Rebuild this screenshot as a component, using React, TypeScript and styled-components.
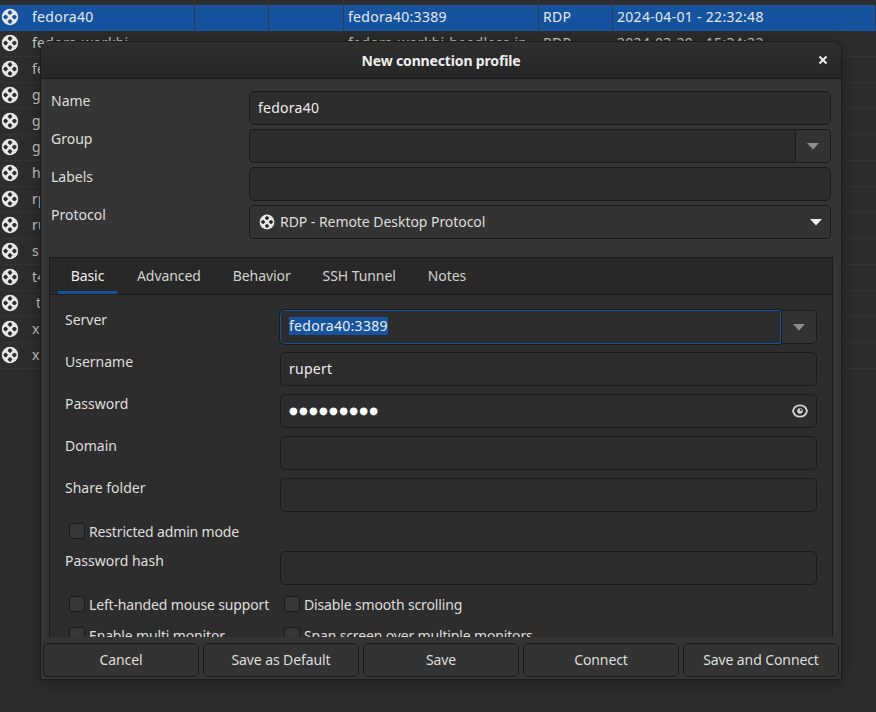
import styled, { createGlobalStyle } from "styled-components";

const SELECTED = "#15539e";
const BORDER = "#1b1b1b";
const TEXT = "#eeeeec";

const COLUMNS = "195px 74px 75px 195px 74px 1fr";

const hosts = [
  { name: "fedora40", host: "fedora40:3389", proto: "RDP", date: "2024-04-01 - 22:32:48", selected: true },
  { name: "fedora-workbi", host: "fedora-workbi-headless-in", proto: "RDP", date: "2024-03-29 - 15:34:22" },
  { name: "fedora" },
  { name: "g" },
  { name: "g" },
  { name: "g" },
  { name: "h" },
  { name: "rp" },
  { name: "ru" },
  { name: "s" },
  { name: "t4" },
  { name: "\u00a0t" },
  { name: "x1" },
  { name: "x1" },
];

const GlobalStyle = createGlobalStyle`
  html, body {
    margin: 0;
    height: 100%;
    background: #2d2d2d;
  }

  body {
    font-family: "Noto Sans", sans-serif;
    font-size: 14px;
    color: ${TEXT};
  }

  * {
    box-sizing: border-box;
  }
`;

const Page = styled.div`
  position: relative;
  width: 876px;
  height: 712px;
  overflow: hidden;
  background: #2d2d2d;
`;

const HeaderStrip = styled.div`
  display: grid;
  grid-template-columns: ${COLUMNS};
  height: 5px;
`;

const HeaderCell = styled.div`
  border-right: 1px solid #3a3a3a;
`;

const Row = styled.div<{ $selected?: boolean }>`
  display: grid;
  grid-template-columns: ${COLUMNS};
  height: 26px;
  background: ${(p) => (p.$selected ? SELECTED : "transparent")};
  border-bottom: 1px solid ${(p) => (p.$selected ? SELECTED : "#343434")};
`;

const Cell = styled.div<{ $selected?: boolean }>`
  display: flex;
  align-items: center;
  gap: 12px;
  padding: 0 0 2px 4px;
  white-space: nowrap;
  overflow: hidden;
  letter-spacing: 0.3px;
  color: ${(p) => (p.$selected ? "#e3e9f2" : "#c8c8c6")};
  border-right: 1px solid ${(p) => (p.$selected ? "#2f3b4a" : "transparent")};

  &:first-child {
    padding-left: 0;
  }
`;

const Dialog = styled.div`
  position: absolute;
  left: 40px;
  top: 41px;
  width: 802px;
  height: 639px;
  display: flex;
  flex-direction: column;
  background: #353535;
  border: 1px solid ${BORDER};
  border-radius: 10px 10px 0 0;
  box-shadow: 0 3px 16px rgba(0, 0, 0, 0.35);
`;

const TitleBar = styled.div`
  position: relative;
  flex: none;
  display: flex;
  align-items: center;
  justify-content: center;
  height: 37px;
  background: linear-gradient(#2f2f2f, #262626);
  border-bottom: 1px solid ${BORDER};
  border-radius: 9px 9px 0 0;
`;

const Title = styled.div`
  font-weight: 700;
  font-size: 14px;
  letter-spacing: -0.15px;
  color: ${TEXT};
`;

const CloseButton = styled.div`
  position: absolute;
  right: 12px;
  top: 12px;
  display: flex;
`;

const TopForm = styled.div`
  flex: none;
  display: grid;
  grid-template-columns: 198px 582px;
  row-gap: 4px;
  padding: 12px 0 0 10px;
`;

const FieldLabel = styled.div`
  line-height: 20px;
  color: #dededc;
`;

const Entry = styled.div<{ $focused?: boolean; $attached?: boolean }>`
  display: flex;
  align-items: center;
  justify-content: space-between;
  flex: 1;
  min-width: 0;
  height: 34px;
  padding: 0 8px 2px;
  background: #2d2d2d;
  border: 1px solid ${(p) => (p.$focused ? SELECTED : BORDER)};
  border-radius: ${(p) => (p.$attached ? "5px 0 0 5px" : "5px")};
  outline: ${(p) => (p.$focused ? `1px solid ${BORDER}` : "none")};
  ${(p) => (p.$attached && !p.$focused ? "border-right-width: 0;" : "")}
`;

const EntryText = styled.span`
  color: ${TEXT};
  letter-spacing: 0.25px;
`;

const SelectedText = styled.span`
  background: ${SELECTED};
  color: ${TEXT};
  line-height: 18px;
  letter-spacing: 0.3px;
`;

const Dots = styled.span`
  font-family: "DejaVu Sans", sans-serif;
  font-size: 10px;
  letter-spacing: 1.3px;
  color: #ffffff;
`;

const Combo = styled.div`
  display: flex;
`;

const ComboButton = styled.div`
  flex: none;
  width: 36px;
  height: 34px;
  display: flex;
  align-items: center;
  justify-content: center;
  background: #333333;
  border: 1px solid ${BORDER};
  border-radius: 0 5px 5px 0;
`;

const Select = styled.div`
  display: flex;
  align-items: center;
  gap: 4px;
  height: 34px;
  padding: 0 8px;
  background: #333333;
  border: 1px solid ${BORDER};
  border-radius: 5px;
`;

const SelectText = styled.span`
  flex: 1;
  color: #dededc;
  margin-bottom: 2px;
  letter-spacing: -0.05px;
`;

const Notebook = styled.div`
  flex: 1;
  min-height: 0;
  margin: 18px 8px 0;
  overflow: hidden;
  display: flex;
  flex-direction: column;
  background: #2d2d2d;
  border: 1px solid ${BORDER};
  border-bottom: 0;
`;

const TabBar = styled.div`
  flex: none;
  display: flex;
  gap: 8px;
  height: 37px;
  padding-left: 8px;
  background: #282828;
  border-bottom: 1px solid ${BORDER};
`;

const Tab = styled.div<{ $active?: boolean }>`
  display: flex;
  align-items: center;
  justify-content: center;
  min-width: 59px;
  padding: 2px 12px 0;
  letter-spacing: -0.08px;
  color: ${(p) => (p.$active ? TEXT : "#d2d2d0")};
  border-bottom: 3px solid ${(p) => (p.$active ? SELECTED : "transparent")};
`;

const BasicForm = styled.div`
  display: grid;
  grid-template-columns: 215px 537px;
  row-gap: 8px;
  padding: 15px 0 0 15px;
`;

const CheckRow = styled.div`
  grid-column: 1 / -1;
  display: grid;
  grid-template-columns: 215px 1fr;
  height: 23px;
  padding: 3px 0 0 4px;
`;

const CheckItem = styled.label`
  display: flex;
  align-items: center;
  gap: 4px;
  height: 16px;
  white-space: nowrap;
  letter-spacing: -0.15px;
  color: #dededc;
`;

const CheckBox = styled.span`
  flex: none;
  width: 16px;
  height: 16px;
  background: #373737;
  border: 1px solid ${BORDER};
  border-radius: 3px;
`;

const ActionBar = styled.div`
  flex: none;
  display: grid;
  grid-template-columns: repeat(5, 156px);
  gap: 4px;
  padding: 6px 2px 2px;
`;

const ActionButton = styled.div`
  height: 34px;
  padding-bottom: 2px;
  display: flex;
  align-items: center;
  justify-content: center;
  background: #333333;
  border: 1px solid ${BORDER};
  border-radius: 5px;
  letter-spacing: -0.1px;
  color: #dededc;
`;

function ProtocolIcon({ size = 20, dot = "#2d2d2d" }: { size?: number; dot?: string }) {
  // four rounded diamonds around the centre
  const spots = [
    [10, 5.6],
    [10, 14.4],
    [5.6, 10],
    [14.4, 10],
  ];
  return (
    <svg width={size} height={size} viewBox="0 0 20 20" style={{ flex: "none" }}>
      <circle cx="10" cy="10" r="8.2" fill="#e8e8e6" />
      {spots.map(([x, y]) => (
        <rect
          key={`${x}-${y}`}
          x={x - 1.9}
          y={y - 1.9}
          width="3.8"
          height="3.8"
          rx="1"
          fill={dot}
          transform={`rotate(45 ${x} ${y})`}
        />
      ))}
    </svg>
  );
}

function Arrow({ dim }: { dim?: boolean }) {
  return (
    <svg width="12" height="7" viewBox="0 0 12 7" style={{ flex: "none" }}>
      <path d="M0 0h12L6 6.500z" fill={dim ? "#8e8e8d" : "#eeeeec"} />
    </svg>
  );
}

function EyeIcon() {
  return (
    <svg width="16" height="14" viewBox="0 0 16 14" style={{ flex: "none", marginBottom: -2 }}>
      <path
        d="M8 1.300C4.600 1.300 1.800 3.600 1 7c.8 3.400 3.600 5.700 7 5.700s6.200-2.300 7-5.700C14.200 3.600 11.400 1.300 8 1.300z"
        fill="none"
        stroke="#d2d2d0"
        strokeWidth="1.800"
      />
      <circle cx="8" cy="7" r="2.800" fill="#d2d2d0" />
      <circle cx="8.800" cy="6" r="1" fill="#2d2d2d" />
    </svg>
  );
}

export default function App() {
  return (
    <Page>
      <GlobalStyle />
      <HeaderStrip>
        <HeaderCell />
        <HeaderCell />
        <HeaderCell />
        <HeaderCell />
        <HeaderCell />
      </HeaderStrip>
      {hosts.map((h, i) => (
        <Row key={i} $selected={h.selected}>
          <Cell $selected={h.selected}>
            <ProtocolIcon dot={h.selected ? SELECTED : "#2d2d2d"} />
            {h.name}
          </Cell>
          <Cell $selected={h.selected} />
          <Cell $selected={h.selected} />
          <Cell $selected={h.selected}>{h.host}</Cell>
          <Cell $selected={h.selected}>{h.proto}</Cell>
          <Cell $selected={h.selected}>{h.date}</Cell>
        </Row>
      ))}

      <Dialog>
        <TitleBar>
          <Title>New connection profile</Title>
          <CloseButton>
            <svg width="12" height="12" viewBox="0 0 12 12">
              <path d="M2.500 2.500l7 7M9.500 2.500l-7 7" stroke="#eeeeec" strokeWidth="2" />
            </svg>
          </CloseButton>
        </TitleBar>

        <TopForm>
          <FieldLabel>Name</FieldLabel>
          <Entry>
            <EntryText>fedora40</EntryText>
          </Entry>
          <FieldLabel>Group</FieldLabel>
          <Combo>
            <Entry $attached />
            <ComboButton>
              <Arrow dim />
            </ComboButton>
          </Combo>
          <FieldLabel>Labels</FieldLabel>
          <Entry />
          <FieldLabel>Protocol</FieldLabel>
          <Select>
            <ProtocolIcon size={18} />
            <SelectText>RDP - Remote Desktop Protocol</SelectText>
            <Arrow />
          </Select>
        </TopForm>

        <Notebook>
          <TabBar>
            <Tab $active>Basic</Tab>
            <Tab>Advanced</Tab>
            <Tab>Behavior</Tab>
            <Tab>SSH Tunnel</Tab>
            <Tab>Notes</Tab>
          </TabBar>
          <BasicForm>
            <FieldLabel>Server</FieldLabel>
            <Combo>
              <Entry $attached $focused>
                <SelectedText>fedora40:3389</SelectedText>
              </Entry>
              <ComboButton>
                <Arrow dim />
              </ComboButton>
            </Combo>
            <FieldLabel>Username</FieldLabel>
            <Entry>
              <EntryText>rupert</EntryText>
            </Entry>
            <FieldLabel>Password</FieldLabel>
            <Entry>
              <Dots>●●●●●●●●●</Dots>
              <EyeIcon />
            </Entry>
            <FieldLabel>Domain</FieldLabel>
            <Entry />
            <FieldLabel>Share folder</FieldLabel>
            <Entry />
            <CheckRow>
              <CheckItem>
                <CheckBox />
                Restricted admin mode
              </CheckItem>
            </CheckRow>
            <FieldLabel>Password hash</FieldLabel>
            <Entry />
            <CheckRow>
              <CheckItem>
                <CheckBox />
                Left-handed mouse support
              </CheckItem>
              <CheckItem>
                <CheckBox />
                Disable smooth scrolling
              </CheckItem>
            </CheckRow>
            <CheckRow>
              <CheckItem>
                <CheckBox />
                Enable multi monitor
              </CheckItem>
              <CheckItem>
                <CheckBox />
                Span screen over multiple monitors
              </CheckItem>
            </CheckRow>
          </BasicForm>
        </Notebook>

        <ActionBar>
          <ActionButton>Cancel</ActionButton>
          <ActionButton>Save as Default</ActionButton>
          <ActionButton>Save</ActionButton>
          <ActionButton>Connect</ActionButton>
          <ActionButton>Save and Connect</ActionButton>
        </ActionBar>
      </Dialog>
    </Page>
  );
}
